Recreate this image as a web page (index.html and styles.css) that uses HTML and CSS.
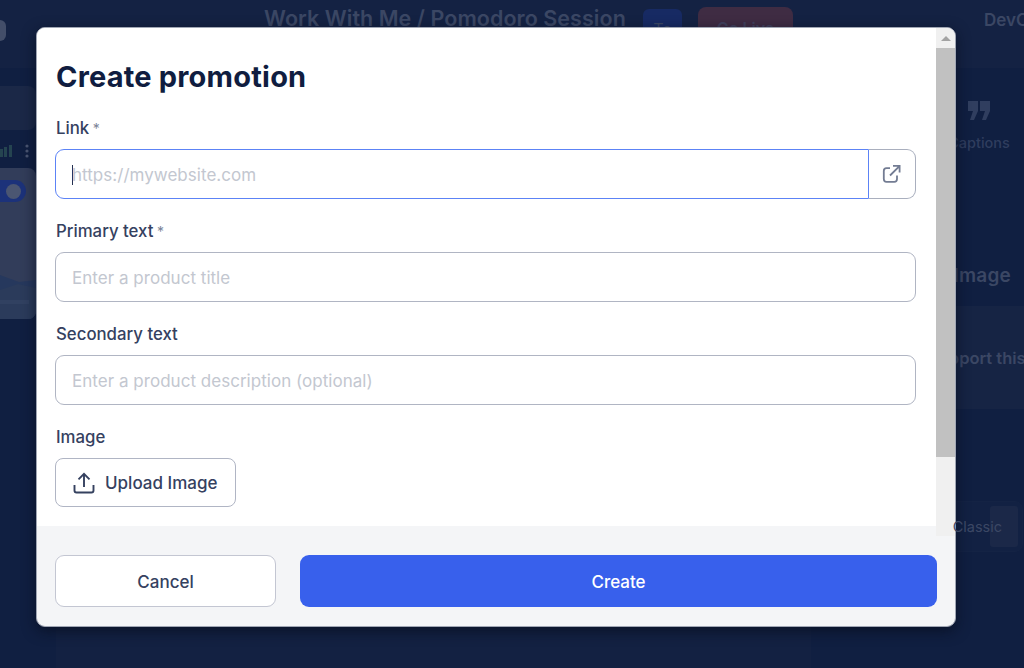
FILE: index.html
```html
<!DOCTYPE html>
<html lang="en">
<head>
  <meta charset="UTF-8">
  <title>Create promotion</title>
  <meta name="viewport" content="width=device-width, initial-scale=1.0">
  <link rel="stylesheet" href="styles.css">
</head>
<body>
  <!-- Studio behind the dialog -->
  <div class="studio">
    <header class="topbar">
      <div class="logo"></div>
      <div class="session-title">Work With Me / Pomodoro Session</div>
      <div class="tag">To</div>
      <div class="go-live">Go Live</div>
      <div class="channel">DevC</div>
    </header>

    <div class="columns">
      <aside class="scenes">
        <div class="scene-card"></div>
        <div class="scene-status">
          <svg width="13" height="14" viewBox="0 0 13 14" fill="#254450">
            <rect x="0" y="5" width="3" height="8"/>
            <rect x="4" y="3" width="3" height="10"/>
            <rect x="9" y="1" width="3" height="12"/>
          </svg>
          <svg width="4" height="14" viewBox="0 0 4 14" fill="#4a5671">
            <circle cx="2" cy="2" r="1.6"/>
            <circle cx="2" cy="7" r="1.6"/>
            <circle cx="2" cy="12" r="1.6"/>
          </svg>
        </div>
        <div class="thumb">
          <div class="toggle"><span></span></div>
          <svg class="hills" width="36" height="48" viewBox="0 0 36 48">
            <path d="M0 4 L8 7 L19 11 L36 9 V48 H0Z" fill="#26385d"/>
            <path d="M0 19 L18 13 L36 17 V48 H0Z" fill="#2b3b5b"/>
            <path d="M0 29 H29 V33 H0Z" fill="#314161"/>
          </svg>
        </div>
      </aside>

      <main class="stage"></main>

      <aside class="tools">
        <div class="tool">
          <svg width="22" height="19" viewBox="0 0 22 19" fill="#303e5f">
            <path d="M0 0H10V10L6 19H2L5 10H0Z"/>
            <path d="M12 0H22V10L18 19H14L17 10H12Z"/>
          </svg>
          <div>Captions</div>
        </div>
        <div class="tool-heading">Image</div>
        <div class="tool-card">Support this</div>
        <div class="segmented"><span>Classic</span><i></i></div>
      </aside>
    </div>
  </div>

  <!-- Dialog -->
  <div class="modal">
    <div class="modal-body">
      <form class="form">
        <h1>Create promotion</h1>

        <div class="label">Link <span>*</span></div>
        <div class="link-row">
          <div class="input focused"><i class="caret"></i>https://mywebsite.com</div>
          <div class="open-link">
            <svg width="20" height="20" viewBox="0 0 20 20" fill="none" stroke="#737c93" stroke-width="1.8">
              <path d="M8 4.2H4.5Q1.8 4.2 1.8 7V15Q1.8 17.8 4.5 17.8H12.3Q15 17.8 15 15V11.5"/>
              <path d="M8 11.5L17.2 2.3M11 1.9H17.6V8.5"/>
            </svg>
          </div>
        </div>

        <div class="label">Primary text <span>*</span></div>
        <div class="input">Enter a product title</div>

        <div class="label">Secondary text</div>
        <div class="input">Enter a product description (optional)</div>

        <div class="label">Image</div>
        <div class="upload">
          <svg width="22" height="22" viewBox="0 0 22 22" fill="none" stroke="#35415f" stroke-width="1.9">
            <path d="M11 15V2M5.5 7.3L11 1.8L16.5 7.3"/>
            <path d="M1.5 13V18.5Q1.5 20.5 3.5 20.5H18.5Q20.5 20.5 20.5 18.5V13"/>
          </svg>
          <span>Upload Image</span>
        </div>
      </form>

      <div class="scrollbar">
        <div class="arrow"></div>
        <div class="thumb-bar"></div>
      </div>
    </div>

    <div class="modal-footer">
      <div class="btn cancel">Cancel</div>
      <div class="btn create">Create</div>
    </div>
  </div>
</body>
</html>
```
FILE: styles.css
```css
* {
  box-sizing: border-box;
}

body {
  margin: 0;
  width: 1024px;
  height: 668px;
  overflow: hidden;
  position: relative;
  font-family: Inter, "Liberation Sans", sans-serif;
  background: #101f41;
}

.studio {
  width: 1024px;
  height: 668px;
  overflow: hidden;
  color: #3b4764;
  white-space: nowrap;
}

.topbar {
  height: 68px;
  background: #142243;
  display: flex;
  align-items: flex-start;
}

.topbar > div {
  flex-shrink: 0;
}

.logo {
  width: 6px;
  height: 21px;
  margin-top: 20px;
  background: #434e69;
  border-radius: 0 6px 6px 0;
}

.session-title {
  width: 379px;
  margin: 5px 0 0 258px;
  line-height: 26px;
  font-size: 21.5px;
  font-weight: 600;
  letter-spacing: 0.05px;
}

.tag {
  width: 39px;
  height: 40px;
  margin-top: 9px;
  padding-top: 10px;
  background: #172a63;
  border-radius: 6px;
  text-align: center;
  font-size: 16px;
}

.go-live {
  width: 95px;
  height: 44px;
  margin: 7px 0 0 16px;
  padding-top: 11px;
  background: #3f2c43;
  border-radius: 8px;
  text-align: center;
  font-size: 16px;
  font-weight: 600;
  color: #41405c;
}

.channel {
  margin: 9px 0 0 191px;
  font-size: 17px;
  font-weight: 600;
  line-height: 22px;
}

.columns {
  display: flex;
  height: 600px;
}

.scenes {
  width: 36px;
  padding-top: 18px;
}

.scene-card {
  height: 44px;
  background: #1b2847;
  border-radius: 0 8px 8px 0;
}

.scene-status {
  display: flex;
  justify-content: space-between;
  padding-right: 7px;
  margin: 14px 0 10px;
}

.thumb {
  height: 151px;
  padding-top: 12px;
  background: #323d5a;
  border-radius: 0 8px 8px 0;
  overflow: hidden;
  display: flex;
  flex-direction: column;
  justify-content: space-between;
}

.toggle {
  width: 26px;
  height: 22px;
  background: #1c327a;
  border-radius: 0 11px 11px 0;
  padding: 4px 0 0 6px;
}

.toggle span {
  display: block;
  width: 15px;
  height: 15px;
  border-radius: 50%;
  background: #4b5672;
}

.stage {
  width: 755px;
  margin-left: 20px;
  background: #132142;
}

.tools {
  width: 213px;
  padding-top: 33px;
}

.tool {
  margin-left: 128px;
  width: 80px;
  text-align: center;
  font-size: 14.5px;
  font-weight: 500;
  line-height: 20px;
  color: #2f3d5e;
}

.tool svg {
  display: block;
  margin: 0 auto 13px;
}

.tool-heading {
  margin: 110px 13px 0 0;
  text-align: right;
  font-size: 19px;
  font-weight: 600;
  line-height: 26px;
  letter-spacing: 0.2px;
}

.tool-card {
  height: 103px;
  margin-top: 17px;
  padding-left: 117px;
  background: #162444;
  font-size: 16.5px;
  font-weight: 600;
  line-height: 105px;
}

.segmented {
  height: 51px;
  width: 112px;
  margin: 92px 0 0 100px;
  padding: 4px;
  border: 1px solid #142344;
  border-radius: 8px;
  background: #122143;
  display: flex;
  justify-content: flex-end;
  font-size: 14.5px;
  line-height: 42px;
}

.segmented span {
  margin-right: -12px;
  z-index: 1;
}

.segmented i {
  width: 28px;
  background: #1b2848;
  border-radius: 3px;
}

.modal {
  position: absolute;
  left: 36px;
  top: 27px;
  width: 920px;
  height: 600px;
  border: 1px solid #a0a6b4;
  border-radius: 9px;
  background: #f4f5f7;
  overflow: hidden;
  box-shadow: 0 4px 14px rgba(7, 13, 28, 0.7);
  color: #35415f;
}

.modal-body {
  height: 508px;
  display: flex;
}

.form {
  width: 899px;
  height: 498px;
  padding: 31px 20px 0 18px;
  background: #fff;
}

h1 {
  margin: 0 0 22px;
  padding-left: 1px;
  font-size: 29px;
  font-weight: 700;
  line-height: 36px;
  letter-spacing: 0.2px;
  color: #101d40;
}

.label {
  height: 22px;
  margin-bottom: 10px;
  padding-left: 1px;
  font-size: 16.8px;
  font-weight: 500;
  line-height: 22px;
}

.label span {
  margin-left: -1px;
  font-size: 14px;
  font-weight: 400;
  color: #7b8498;
}

.input {
  height: 50px;
  margin-bottom: 21px;
  padding-left: 16px;
  border: 1px solid #b0b5c3;
  border-radius: 9px;
  background: #fff;
  font-size: 17px;
  line-height: 50px;
  letter-spacing: 0.03px;
  color: #c3c7d0;
}

.link-row {
  display: flex;
}

.focused {
  flex: 1;
  border-color: #5c83f6;
  border-radius: 9px 0 0 9px;
}

.caret {
  display: inline-block;
  width: 1px;
  height: 20px;
  margin-right: -1px;
  background: #24304f;
  vertical-align: -4px;
}

.open-link {
  width: 47px;
  height: 50px;
  border: 1px solid #a9afbe;
  border-left: none;
  border-radius: 0 9px 9px 0;
  display: flex;
  align-items: center;
  padding-left: 13px;
}

.upload {
  width: 181px;
  height: 49px;
  border: 1px solid #b0b5c4;
  border-radius: 8px;
  display: flex;
  align-items: center;
  gap: 10px;
  padding-left: 17px;
  font-size: 17px;
  font-weight: 500;
  line-height: 22px;
}

.upload span {
  padding-top: 1px;
}

.scrollbar {
  width: 19px;
  background: #f0f0f0;
}

.arrow {
  height: 20px;
  padding: 8px 0 0 5px;
}

.arrow::before {
  content: "";
  display: block;
  width: 10px;
  height: 5px;
  background: #a3a3a3;
  clip-path: polygon(50% 0, 100% 100%, 0 100%);
}

.thumb-bar {
  height: 409px;
  background: #c1c1c1;
}

.modal-footer {
  display: flex;
  gap: 24px;
  padding: 19px 18px 0;
}

.btn {
  height: 52px;
  border-radius: 9px;
  text-align: center;
  font-size: 17px;
  font-weight: 500;
  line-height: 52px;
}

.cancel {
  width: 221px;
  border: 1px solid #c3c6d2;
  background: #fff;
}

.create {
  flex: 1;
  background: #3860ec;
  color: #fff;
  line-height: 54px;
}
```
